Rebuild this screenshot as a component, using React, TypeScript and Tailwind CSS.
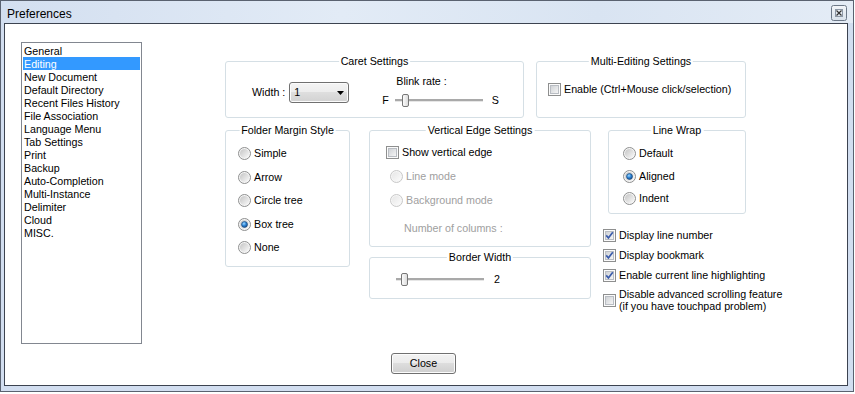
import React from "react";

const FONT = "font-['Liberation_Sans',Arial,sans-serif]";

function Radio({ checked, disabled }: { checked?: boolean; disabled?: boolean }) {
  const id = React.useId().replace(/[^a-zA-Z0-9]/g, "");
  return (
    <svg width="13" height="13" viewBox="0 0 13 13" className="shrink-0">
      <defs>
        <linearGradient id={`rg${id}`} x1="0" y1="0" x2="1" y2="1">
          <stop offset="0" stopColor={disabled ? "#e6e6e6" : "#c4c4c4"} />
          <stop offset="1" stopColor={disabled ? "#fbfbfb" : "#fafafa"} />
        </linearGradient>
        <radialGradient id={`rd${id}`} cx="0.4" cy="0.35" r="0.75">
          <stop offset="0" stopColor="#9fd8ff" />
          <stop offset="0.45" stopColor="#2f86d6" />
          <stop offset="1" stopColor="#0b3b78" />
        </radialGradient>
      </defs>
      <circle cx="6.5" cy="6.5" r="6" fill="#f6f6f6" stroke={disabled ? "#c8c8c8" : "#8e8f8f"} />
      <circle cx="6.5" cy="6.5" r="4.6" fill={`url(#rg${id})`} />
      {checked && (
        <circle cx="6.5" cy="6.5" r="3" fill={`url(#rd${id})`} stroke="#1b4777" strokeWidth="0.6" />
      )}
    </svg>
  );
}

function Check({ checked }: { checked?: boolean }) {
  const id = React.useId().replace(/[^a-zA-Z0-9]/g, "");
  return (
    <svg width="13" height="13" viewBox="0 0 13 13" className="shrink-0">
      <defs>
        <linearGradient id={`cg${id}`} x1="0" y1="0" x2="1" y2="1">
          <stop offset="0" stopColor="#cdd0d4" />
          <stop offset="1" stopColor="#f7f7f7" />
        </linearGradient>
      </defs>
      <rect x="0.5" y="0.5" width="12" height="12" fill="#fbfbfb" stroke="#8e8f8f" />
      <rect x="2.5" y="2.5" width="8" height="8" fill={`url(#cg${id})`} stroke="#b9bdc3" />
      {checked && (
        <path d="M3.2 6.4 L5.4 8.9 L9.8 3.2" fill="none" stroke="#3b5cab" strokeWidth="1.7" />
      )}
    </svg>
  );
}

function Group({
  title,
  className,
  children,
}: {
  title: string;
  className: string;
  children?: React.ReactNode;
}) {
  return (
    <div className={`relative rounded-[3px] border border-[#d5dfe5] ${className}`}>
      <span className="absolute left-1/2 -top-[7px] -translate-x-1/2 bg-white px-[2px] leading-[13px] whitespace-nowrap">
        {title}
      </span>
      {children}
    </div>
  );
}

function Slider({ thumb }: { thumb: number }) {
  return (
    <div className="relative w-[88px] h-[13px] flex items-center">
      <div className="w-full h-[2px] bg-[#a9a9a9] border-b border-[#e6e6e6] box-content" />
      <div
        className="absolute top-0 w-[7px] h-[13px] rounded-[2px] border border-[#777] bg-[linear-gradient(90deg,#fbfbfb,#dcdcdc)]"
        style={{ left: thumb }}
      />
    </div>
  );
}

function Dropdown() {
  return (
    <div className="w-[60px] h-[21px] rounded-[3px] border border-[#707070] bg-[linear-gradient(#f4f4f4_0%,#ececec_50%,#dedede_50%,#d2d2d2_100%)] shadow-[inset_0_0_0_1px_#fbfbfb] flex items-center justify-between pl-[4px] pr-[4px]">
      <span>1</span>
      <svg width="7" height="4" viewBox="0 0 7 4">
        <path d="M0 0 H7 L3.5 4 Z" fill="#000" />
      </svg>
    </div>
  );
}

function RadioRow({
  label,
  checked,
  disabled,
}: {
  label: string;
  checked?: boolean;
  disabled?: boolean;
}) {
  return (
    <div className="flex items-center gap-[3px] h-[13px]">
      <Radio checked={checked} disabled={disabled} />
      <span className={disabled ? "text-[#a0a0a0]" : ""}>{label}</span>
    </div>
  );
}

function CheckRow({ label, checked }: { label: string; checked?: boolean }) {
  return (
    <div className="flex items-center gap-[3px] h-[13px]">
      <Check checked={checked} />
      <span className="whitespace-nowrap">{label}</span>
    </div>
  );
}

const items = [
  "General",
  "Editing",
  "New Document",
  "Default Directory",
  "Recent Files History",
  "File Association",
  "Language Menu",
  "Tab Settings",
  "Print",
  "Backup",
  "Auto-Completion",
  "Multi-Instance",
  "Delimiter",
  "Cloud",
  "MISC.",
];

function CloseX() {
  return (
    <svg width="16" height="16" viewBox="0 0 16 16" className="mt-[4px] mr-[6px] shrink-0">
      <defs>
        <linearGradient id="cx" x1="0" y1="0" x2="0" y2="1">
          <stop offset="0" stopColor="#f3f6fa" />
          <stop offset="1" stopColor="#d9e2ec" />
        </linearGradient>
      </defs>
      <rect x="0.5" y="0.5" width="15" height="15" rx="2" fill="url(#cx)" stroke="#6c7888" />
      <rect x="4.5" y="4.5" width="7" height="7" fill="none" stroke="#8c97a6" />
      <path d="M5.5 5.5 L10.5 10.5 M10.5 5.5 L5.5 10.5" stroke="#333" strokeWidth="1.2" />
    </svg>
  );
}

export default function App() {
  return (
    <div className={`w-[855px] h-[394px] bg-white ${FONT} text-[10.7px] leading-[13px] text-black`}>
      <div className="w-[854px] h-[392px] border border-[#5a6270] bg-[#d2def0] flex flex-col">
        <div className="h-[22px] flex items-start justify-between bg-[linear-gradient(90deg,#d3dff0,#e2ebf6_40%,#d9e4f2_70%,#e4ecf6)]">
          <span className="ml-[6px] mt-[6px] text-[12px] leading-[14px]">Preferences</span>
          <CloseX />
        </div>
        <div className="flex-1 ml-[3px] mr-[5px] mb-[5px] border border-[#3c4350] bg-white flex flex-col">
          <div className="flex items-start pt-[18px] pl-[16px]">
            <div className="w-[121px] h-[302px] border border-[#828790] p-px flex flex-col shrink-0">
              {items.map((it) => (
                <div
                  key={it}
                  className={
                    it === "Editing"
                      ? "h-[13px] pl-px pt-px leading-[12px] bg-[#3399ff] text-white whitespace-nowrap"
                      : "h-[13px] pl-px pt-px leading-[12px] whitespace-nowrap"
                  }
                >
                  {it}
                </div>
              ))}
            </div>

            <div className="ml-[83px] mt-[19px] flex flex-col">
              <div className="flex gap-[12px]">
                <Group title="Caret Settings" className="w-[299px] h-[57px] flex items-start">
                  <div className="ml-[26px] mt-[20px] flex items-center gap-[4px]">
                    <span>Width :</span>
                    <Dropdown />
                  </div>
                  <div className="ml-[33px] mt-[13px] flex flex-col">
                    <span className="ml-[14px]">Blink rate :</span>
                    <div className="mt-[6px] flex items-center h-[13px]">
                      <span>F</span>
                      <div className="ml-[6px]">
                        <Slider thumb={7} />
                      </div>
                      <span className="ml-[9px]">S</span>
                    </div>
                  </div>
                </Group>
                <Group title="Multi-Editing Settings" className="w-[210px] h-[57px]">
                  <div className="ml-[11px] mt-[21px]">
                    <CheckRow label="Enable (Ctrl+Mouse click/selection)" />
                  </div>
                </Group>
              </div>

              <div className="flex items-start mt-[12px]">
                <Group title="Folder Margin Style" className="w-[125px] h-[137px] shrink-0">
                  <div className="ml-[12px] mt-[16px] flex flex-col gap-[10.5px]">
                    <RadioRow label="Simple" />
                    <RadioRow label="Arrow" />
                    <RadioRow label="Circle tree" />
                    <RadioRow label="Box tree" checked />
                    <RadioRow label="None" />
                  </div>
                </Group>

                <div className="ml-[19px] w-[222px] flex flex-col gap-[10px] shrink-0">
                  <Group title="Vertical Edge Settings" className="h-[117px]">
                    <div className="ml-[16px] mt-[15px]">
                      <CheckRow label="Show vertical edge" />
                    </div>
                    <div className="ml-[20px] mt-[11px]">
                      <RadioRow label="Line mode" disabled />
                    </div>
                    <div className="ml-[20px] mt-[10.5px]">
                      <RadioRow label="Background mode" disabled />
                    </div>
                    <div className="ml-[34px] mt-[15.5px] text-[#a0a0a0]">Number of columns :</div>
                  </Group>
                  <Group title="Border Width" className="h-[42px]">
                    <div className="ml-[26px] mt-[14.5px] flex items-center h-[13px]">
                      <Slider thumb={5} />
                      <span className="ml-[10px]">2</span>
                    </div>
                  </Group>
                </div>

                <div className="ml-[12px] flex flex-col">
                  <Group title="Line Wrap" className="ml-[5px] w-[138px] h-[84px]">
                    <div className="ml-[14px] mt-[16px] flex flex-col gap-[9.5px]">
                      <RadioRow label="Default" />
                      <RadioRow label="Aligned" checked />
                      <RadioRow label="Indent" />
                    </div>
                  </Group>
                  <div className="mt-[15px]">
                    <CheckRow label="Display line number" checked />
                  </div>
                  <div className="mt-[7px]">
                    <CheckRow label="Display bookmark" checked />
                  </div>
                  <div className="mt-[7px]">
                    <CheckRow label="Enable current line highlighting" checked />
                  </div>
                  <div className="mt-[6px] flex items-center gap-[3px] h-[24px]">
                    <Check />
                    <div className="leading-[12px] whitespace-nowrap">
                      <div>Disable advanced scrolling feature</div>
                      <div>(if you have touchpad problem)</div>
                    </div>
                  </div>
                </div>
              </div>
            </div>
          </div>

          <div className="mt-auto mb-[11px] flex justify-center pr-[5px]">
            <button className="w-[65px] h-[21px] rounded-[3px] border border-[#707070] bg-[linear-gradient(#f2f2f2_0%,#ebebeb_50%,#dddddd_50%,#cfcfcf_100%)] shadow-[inset_0_0_0_1px_#fcfcfc] text-[10.7px] leading-[13px]">
              Close
            </button>
          </div>
        </div>
      </div>
    </div>
  );
}
